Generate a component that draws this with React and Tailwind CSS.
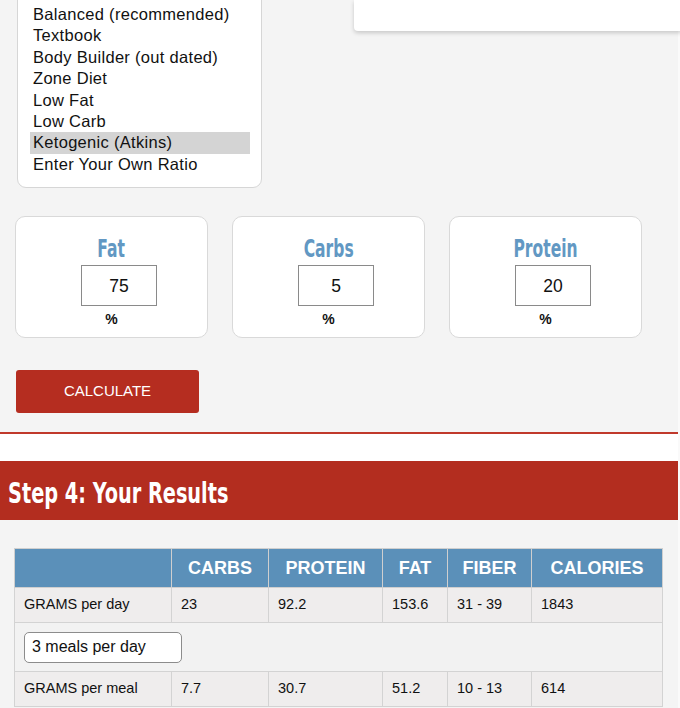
import React from "react";

const options = [
  "Balanced (recommended)",
  "Textbook",
  "Body Builder (out dated)",
  "Zone Diet",
  "Low Fat",
  "Low Carb",
  "Ketogenic (Atkins)",
  "Enter Your Own Ratio",
];

const sans = { fontFamily: '"Liberation Sans", Arial, sans-serif' };
const cond = { fontFamily: '"DejaVu Sans Condensed", "DejaVu Sans", sans-serif' };

function MacroCard({ label, value }) {
  return (
    <div className="w-[193px] h-[122px] bg-white border border-[#d9d9d9] rounded-[10px] flex flex-col items-center pt-[16px]">
      <div className="h-[32px] flex items-center">
        <span className="inline-block scale-x-[0.72] text-[24px] leading-[32px] font-bold text-[#6298c3]" style={cond}>
          {label}
        </span>
      </div>
      <div className="ml-[15px] w-[76px] h-[41px] border border-[#8a8a8a] bg-white flex items-center justify-center text-[17.5px] text-[#111]" style={sans}>
        {value}
      </div>
      <div className="mt-[3px] text-[14px] font-bold text-[#111]" style={sans}>%</div>
    </div>
  );
}

export default function App() {
  const header = ["", "CARBS", "PROTEIN", "FAT", "FIBER", "CALORIES"];
  const widths = ["w-[157px]", "w-[97px]", "w-[114px]", "w-[65px]", "w-[84px]", "w-[131px]"];
  const day = ["GRAMS per day", "23", "92.2", "153.6", "31 - 39", "1843"];
  const meal = ["GRAMS per meal", "7.7", "30.7", "51.2", "10 - 13", "614"];
  return (
    <div className="w-[680px] h-[708px] overflow-hidden bg-[#fafafa]" style={sans}>
      <div className="w-[678px] h-full bg-[#f4f4f4]">
        {/* top */}
        <div className="flex items-start">
          <div className="ml-[17px] -mt-[9px] w-[245px] bg-white border border-[#d6d6d6] rounded-[9px] pl-[12px] pr-[11px] pt-[12px] pb-[12px]">
            {options.map((o) => (
              <div
                key={o}
                className={`pl-[3px] h-[21.4px] leading-[21.4px] text-[16.5px] tracking-[0.3px] text-[#111] whitespace-nowrap ${o.startsWith("Ketogenic") ? "bg-[#d4d4d4]" : ""}`}
              >
                {o}
              </div>
            ))}
          </div>
          <div className="ml-[92px] flex-1 -mr-[4px] h-[31px] bg-white rounded-bl-[4px] shadow-[0_2px_4px_rgba(0,0,0,0.18)]" />
        </div>

        {/* cards */}
        <div className="mt-[28px] ml-[15px] flex gap-[24px]">
          <MacroCard label="Fat" value="75" />
          <MacroCard label="Carbs" value="5" />
          <MacroCard label="Protein" value="20" />
        </div>

        <button className="mt-[32px] ml-[16px] w-[183px] h-[43px] bg-[#b52d20] rounded-[3px] text-white text-[15px] flex items-center justify-center">
          CALCULATE
        </button>

        <div className="mt-[19px] h-[2px] bg-[#c0392b]" />
        <div className="h-[27px] bg-white" />
        <div className="h-[59px] bg-[#b32d1f] flex items-center pl-[8px] pt-[5px]">
          <span className="inline-block origin-left scale-x-[0.74] text-white text-[29px] font-bold leading-none" style={cond}>
            Step 4: Your Results
          </span>
        </div>

        {/* table */}
        <table className="mt-[28px] ml-[14px] border-collapse text-[#111]">
          <thead>
            <tr className="bg-[#5b90b9]">
              {header.map((h, i) => (
                <th key={i} className={`${widths[i]} h-[39px] border border-[#cfcfcf] text-white text-[18px] font-bold text-center p-0`}>
                  {h}
                </th>
              ))}
            </tr>
          </thead>
          <tbody>
            <tr className="bg-[#efeded]">
              {day.map((d, i) => (
                <td key={i} className="h-[35px] border border-[#d3d3d3] text-[14.5px] pl-[9px] p-0">{d}</td>
              ))}
            </tr>
            <tr className="bg-[#f2f2f2]">
              <td colSpan={6} className="h-[49px] border border-[#d3d3d3] pl-[9px]">
                <div className="w-[158px] h-[31px] bg-white border border-[#8c8c8c] rounded-[5px] flex items-center pl-[7px] text-[16px]">
                  3 meals per day
                </div>
              </td>
            </tr>
            <tr className="bg-[#efeded]">
              {meal.map((d, i) => (
                <td key={i} className="h-[35px] border border-[#d3d3d3] text-[14.5px] pl-[9px] p-0">{d}</td>
              ))}
            </tr>
          </tbody>
        </table>
      </div>
    </div>
  );
}
